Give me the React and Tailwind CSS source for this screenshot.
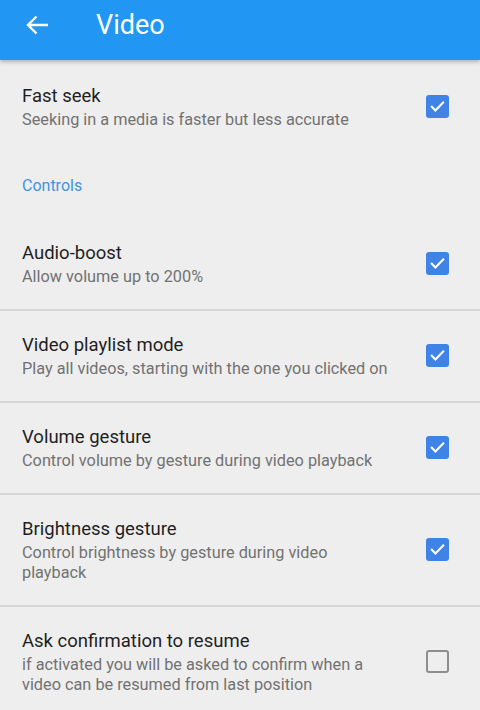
import React from 'react';

const font = { fontFamily: 'Roboto, "Noto Sans", sans-serif' };

const items = [
    { title: 'Audio-boost', sub: 'Allow volume up to 200%', on: true },
    { title: 'Video playlist mode', sub: 'Play all videos, starting with the one you clicked on', on: true },
    { title: 'Volume gesture', sub: 'Control volume by gesture during video playback', on: true },
    { title: 'Brightness gesture', sub: 'Control brightness by gesture during video playback', on: true },
    { title: 'Ask confirmation to resume', sub: 'if activated you will be asked to confirm when a video can be resumed from last position', on: false },
];

const CheckBox = ({ on }) => (
    on ? (
        <div className="w-[23px] h-[23px] rounded-[3px] bg-[#3f83e6] flex items-center justify-center">
            <svg width="17" height="17" viewBox="0 0 24 24" fill="none" stroke="white" strokeWidth="3" strokeLinecap="square">
                <path d="M4 12.5l5 5L20 6.5" />
            </svg>
        </div>
    ) : (
        <div className="w-[23px] h-[23px] rounded-[3px] border-2 border-[#8e8e8e]" />
    )
);

const Row = ({ title, sub, on, last, first }) => (
    <div className={`flex items-center pl-[22px] pr-[31px] pb-[22px] ${first ? 'pt-[22px]' : 'pt-[20px]'} ${last ? '' : 'border-b-2 border-[#d6d6d6]'}`}>
        <div className="w-[373px]">
            <div className="text-[18.5px] leading-[28px] text-[#1f1f1f]">{title}</div>
            <div className="text-[16.3px] leading-[20px] text-[#727272]">{sub}</div>
        </div>
        <div className="flex-1" />
        <CheckBox on={on} />
    </div>
);

export default function App() {
    return (
        <div className="w-[480px] h-[710px] overflow-hidden bg-[#eeeeee]" style={font}>
            <div className="h-[60px] pb-[10px] bg-[#2196f3] flex items-center shadow-[0_2px_4px_rgba(0,0,0,0.25)] relative z-10">
                <svg className="ml-[26px]" width="23" height="20" viewBox="0 0 23 20" fill="none" stroke="white" strokeWidth="2.4">
                    <path d="M22 10H2M10.5 1.5L2 10l8.5 8.5" />
                </svg>
                <span className="ml-[47px] text-[27px] leading-[32px] text-white">Video</span>
            </div>
            <Row title="Fast seek" sub="Seeking in a media is faster but less accurate" on last first />
            <div className="h-[67px] pl-[22px] pt-[24px] text-[16px] leading-[20px] text-[#3d94e0]">Controls</div>
            {items.map((it, i) => (
                <Row key={it.title} {...it} last={i === items.length - 1} />
            ))}
        </div>
    );
}
